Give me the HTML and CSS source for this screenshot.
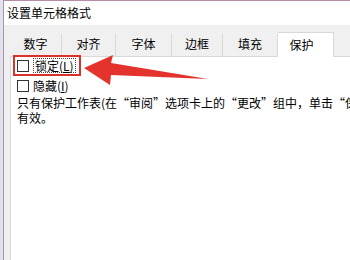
FILE: index.html
```html
<!DOCTYPE html>
<html lang="zh-CN">
<head>
    <meta charset="UTF-8" />
    <title>设置单元格格式</title>
    <link rel="stylesheet" href="styles.css">
</head>
<body>
    <div class="window">
        <div class="titlebar">设置单元格格式</div>

        <div class="dialog">
            <div class="tabs">
                <div class="tab tab-num">数字</div>
                <div class="tab tab-align">对齐</div>
                <div class="tab tab-font">字体</div>
                <div class="tab tab-border">边框</div>
                <div class="tab tab-fill">填充</div>
                <div class="tab tab-protect active">保护</div>
            </div>

            <div class="panel">
                <label class="check-row marked">
                    <span class="checkbox"></span>
                    <span class="focus">锁定(<u>L</u>)</span>
                </label>
                <label class="check-row">
                    <span class="checkbox"></span>
                    <span>隐藏(<u>I</u>)</span>
                </label>
                <p class="note">
                    只有保护工作表(在“审阅”选项卡上的“更改”组中，单击“保护工作表”按钮)后，锁定单元格或隐藏公式才<br>有效。
                </p>
            </div>
        </div>
    </div>

    <!-- annotation arrow drawn over the dialog -->
    <svg class="arrow" width="350" height="260" viewBox="0 0 350 260">
        <polygon points="84,68 113,55 111,63 208,79 111,75 110,85" fill="#e3332c"/>
    </svg>
</body>
</html>
```

FILE: styles.css
```css
* {
    margin: 0;
    padding: 0;
    box-sizing: border-box;
}

body {
    width: 350px;
    height: 260px;
    overflow: hidden;
    background: #dde4ec;
    font-family: "Noto Sans CJK SC", "Liberation Sans", sans-serif;
    font-size: 12px;
    color: #000;
    position: relative;
}

.window {
    margin-left: 3px;
    width: 420px;
    height: 260px;
    background: #f0f0f0;
    border-left: 1px solid #b68ca9;
    border-top: 1px solid #b68ca9;
}

.titlebar {
    height: 24px;
    line-height: 24px;
    padding-left: 3px;
    background: #fff;
}

.dialog {
    padding-left: 6px;
}

.tabs {
    display: flex;
    align-items: flex-end;
    height: 31px;
}

.tab {
    height: 22px;
    line-height: 20px;
    text-align: center;
    border-right: 1px solid #d9d9d9;
}

.tab-num { width: 52px; }
.tab-align { width: 54px; }
.tab-font { width: 56px; }
.tab-border { width: 51px; }
.tab-fill { width: 55px; }

.tab.active {
    width: 56px;
    height: 25px;
    line-height: 23px;
    padding-right: 8px;
    background: #fff;
    border: 1px solid #d9d9d9;
    border-bottom: none;
    border-left: none;
    margin-bottom: -1px;
    position: relative;
}

.panel {
    height: 210px;
    background: #fff;
    border: 1px solid #d9d9d9;
    padding: 1px 0 0 5px;
}

.check-row {
    display: flex;
    width: max-content;
    align-items: center;
    height: 15px;
    padding-left: 1px;
    padding-right: 2px;
}

.check-row.marked {
    outline: 2px solid #d8322a;
    outline-offset: 1px;
    margin-bottom: 5px;
}

.checkbox {
    width: 12px;
    height: 12px;
    border: 1px solid #333;
    background: #fff;
    margin-right: 4px;
}

.focus {
    border: 1px dotted #444;
    line-height: 13px;
    padding: 0 1px;
}

.note {
    margin-top: 2px;
    padding-left: 1px;
    line-height: 15px;
    white-space: nowrap;
}

.arrow {
    position: absolute;
    left: 0;
    top: 0;
    pointer-events: none;
}
```
